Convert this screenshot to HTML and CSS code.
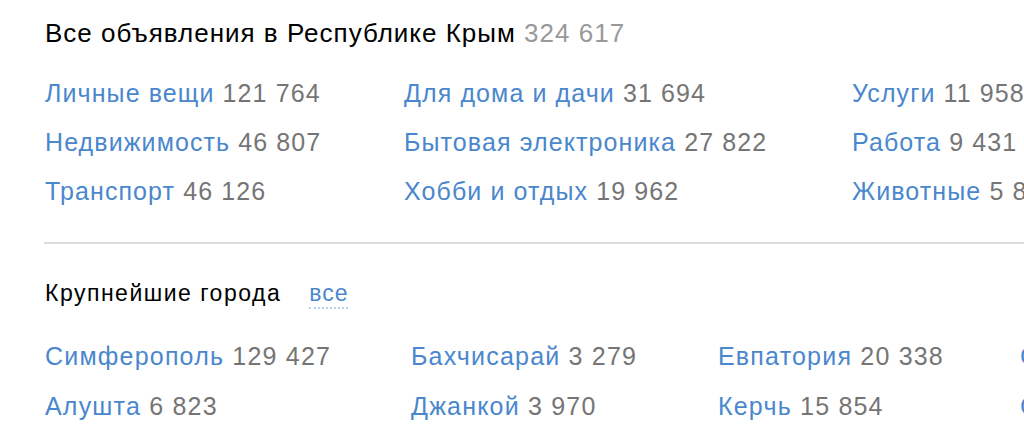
FILE: index.html
```html
<!DOCTYPE html>
<html lang="ru">
<head>
<meta charset="utf-8">
<link rel="stylesheet" href="styles.css">
</head>
<body>
<div class="page">
  <h2 class="title">Все объявления в Республике Крым <span class="total">324 617</span></h2>
  <div class="cats">
    <div class="col c1">
      <div class="row"><a class="link">Личные вещи</a> <span class="num">121 764</span></div>
      <div class="row"><a class="link">Недвижимость</a> <span class="num">46 807</span></div>
      <div class="row"><a class="link">Транспорт</a> <span class="num">46 126</span></div>
    </div>
    <div class="col c2">
      <div class="row"><a class="link">Для дома и дачи</a> <span class="num">31 694</span></div>
      <div class="row"><a class="link">Бытовая электроника</a> <span class="num">27 822</span></div>
      <div class="row"><a class="link">Хобби и отдых</a> <span class="num">19 962</span></div>
    </div>
    <div class="col c3">
      <div class="row"><a class="link">Услуги</a> <span class="num">11 958</span></div>
      <div class="row"><a class="link">Работа</a> <span class="num">9 431</span></div>
      <div class="row"><a class="link">Животные</a> <span class="num">5 874</span></div>
    </div>
  </div>
  <hr class="divider">
  <div class="cities-head">
    <span class="cities-title">Крупнейшие города</span>
    <a class="all">все</a>
  </div>
  <div class="cities">
    <div class="col k1">
      <div class="row"><a class="link">Симферополь</a> <span class="num">129 427</span></div>
      <div class="row"><a class="link">Алушта</a> <span class="num">6 823</span></div>
    </div>
    <div class="col k2">
      <div class="row"><a class="link">Бахчисарай</a> <span class="num">3 279</span></div>
      <div class="row"><a class="link">Джанкой</a> <span class="num">3 970</span></div>
    </div>
    <div class="col k3">
      <div class="row"><a class="link">Евпатория</a> <span class="num">20 338</span></div>
      <div class="row"><a class="link">Керчь</a> <span class="num">15 854</span></div>
    </div>
    <div class="col k4">
      <div class="row"><a class="link">Севастополь</a> <span class="num">41 902</span></div>
      <div class="row"><a class="link">Судак</a> <span class="num">2 315</span></div>
    </div>
  </div>
</div>
</body>
</html>
```

FILE: styles.css
```css
html, body {
  margin: 0;
  padding: 0;
  background: #fff;
  overflow: hidden;
}
.page {
  width: 1400px;
  padding: 18px 0 0 45px;
  font-family: "Liberation Sans", Arial, sans-serif;
  color: #000;
}
.title {
  margin: 0;
  font-size: 26px;
  letter-spacing: 1px;
  line-height: 30px;
  font-weight: normal;
}
.total {
  color: #999;
}
.cats {
  display: grid;
  grid-template-columns: 359px 448px 400px;
  margin-top: 21px;
}
.row {
  font-size: 25px;
  letter-spacing: 1.1px;
  line-height: 49px;
  white-space: nowrap;
}
.link {
  color: #4a87cd;
  text-decoration: none;
}
.num {
  color: #757575;
}
.divider {
  margin: 26px 0 0 -1px;
  border: 0;
  height: 2px;
  background: #dcdcdc;
}
.cities-head {
  margin-top: 34px;
  font-size: 23px;
  letter-spacing: 1.5px;
  line-height: 30px;
  display: flex;
  gap: 28px;
}
.all {
  color: #4a87cd;
  border-bottom: 2px dotted #b5d2ee;
  line-height: 24px;
  height: 26px;
  align-self: flex-start;
  margin-top: 3px;
  letter-spacing: 1px;
}
.cities {
  display: grid;
  grid-template-columns: 366px 307px 302px 300px;
  margin-top: 22px;
}
.cities .row {
  line-height: 50px;
  letter-spacing: 1.2px;
}
```
